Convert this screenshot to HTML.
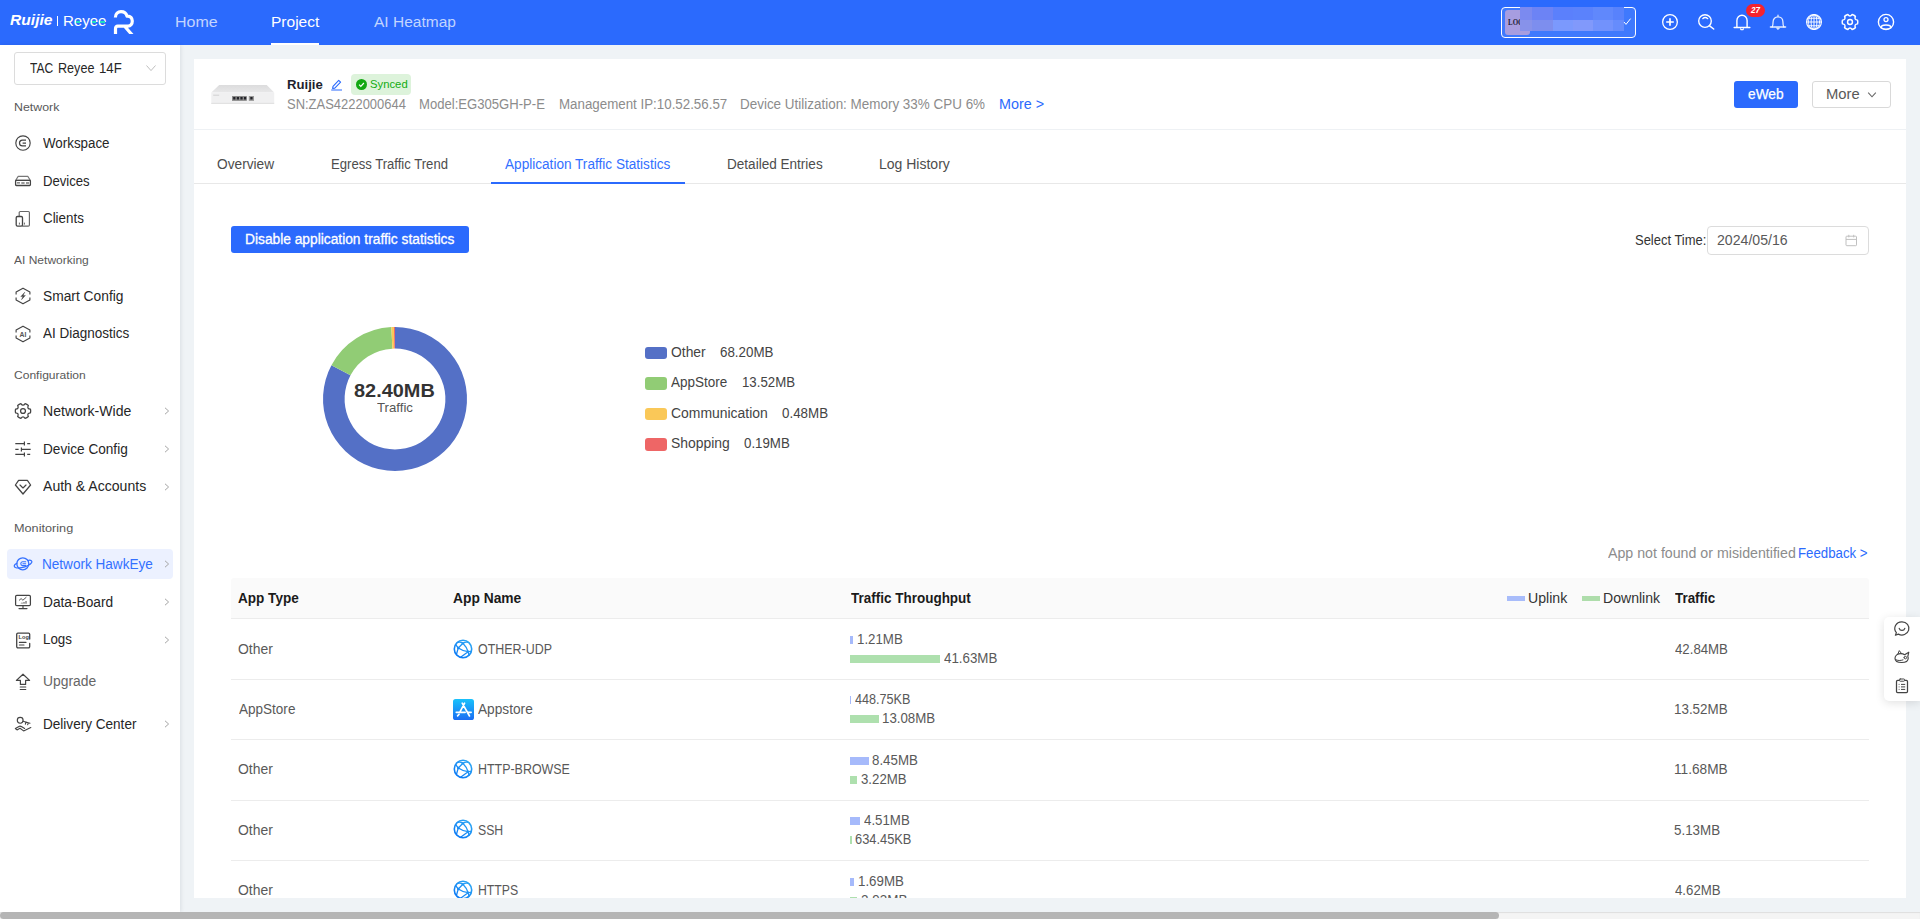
<!DOCTYPE html>
<html lang="en"><head><meta charset="utf-8"><title>Ruijie Reyee Cloud - Application Traffic Statistics</title>
<style>
html,body{margin:0;padding:0}
body{width:1920px;height:919px;overflow:hidden;position:relative;background:#EFF3F6;font-family:"Liberation Sans",sans-serif}
.t{position:absolute;white-space:pre;line-height:1;font-family:"Liberation Sans",sans-serif;transform-origin:0 0}
.ic{position:absolute;overflow:visible}
i{display:block;font-style:normal}
.bar{position:absolute;height:8px}
#hdr{position:absolute;left:0;top:0;width:1920px;height:45px;background:#2B6AFD}
#side{position:absolute;left:0;top:45px;width:180px;height:867px;background:#fff;box-shadow:1px 0 4px rgba(0,21,41,.09)}
#card{position:absolute;left:194px;top:59px;width:1712px;height:839px;background:#fff;overflow:hidden}
#sb{position:absolute;left:0;top:912px;width:1920px;height:7px;background:#f4f4f4;box-shadow:inset 0 1px 1px #dedede}
#sb b{position:absolute;left:0;top:0;width:1499px;height:7px;border-radius:3.500px;background:#b5b5b5}
</style></head><body>
<header id="hdr">
<i style="position:absolute;left:56.500px;top:15.500px;width:1.200px;height:10.500px;background:#fff"></i>
<svg class="ic" style="left:112px;top:8px;overflow:hidden" width="24" height="25.800" viewBox="0 0 24 25.800" fill="none" stroke="#fff" stroke-width="3.200" stroke-linecap="butt" stroke-linejoin="round"><path d="M3.400 9.400C3.400 5.600 6 3.600 9 3.600c3 0 5.300 1.800 6 4.500 3.500-.400 5.300 2.300 5.300 5 0 3-1.800 5-4.300 5H5.800C4.300 18.100 3.500 19.100 3.500 21V27M12.600 18.300L20.400 27.200"/></svg>
<i style="position:absolute;left:271px;top:43px;width:48px;height:2px;background:#fff"></i>
<div style="position:absolute;left:1501px;top:7px;width:133px;height:29px;border:1.500px solid #fff;border-radius:4px;background:#3f79fd"></div>
<i style="position:absolute;left:1505px;top:10px;width:25px;height:24.500px;border-radius:3px;background:#a79de0"></i>
<span class="t" style="left:1507.5px;top:19px;font-size:7.5px;color:#1f1f3a;transform:scaleX(0.9297);font-weight:700;font-family:'Liberation Serif',serif;">LOG</span>
<i style="position:absolute;left:1520.0px;top:7px;width:12.7px;height:13px;background:#7b8af0"></i><i style="position:absolute;left:1520.0px;top:20px;width:12.7px;height:11px;background:#8792ea"></i><i style="position:absolute;left:1532.4px;top:7px;width:20.9px;height:13px;background:#6c83f5"></i><i style="position:absolute;left:1532.4px;top:20px;width:20.9px;height:11px;background:#7d8eee"></i><i style="position:absolute;left:1553.0px;top:7px;width:19.8px;height:13px;background:#5b80fc"></i><i style="position:absolute;left:1553.0px;top:20px;width:19.8px;height:11px;background:#7b99fd"></i><i style="position:absolute;left:1572.5px;top:7px;width:20.8px;height:13px;background:#5b82fc"></i><i style="position:absolute;left:1572.5px;top:20px;width:20.8px;height:11px;background:#8199fb"></i><i style="position:absolute;left:1593.0px;top:7px;width:20.3px;height:13px;background:#6088fc"></i><i style="position:absolute;left:1593.0px;top:20px;width:20.3px;height:11px;background:#7292fc"></i><i style="position:absolute;left:1613.0px;top:7px;width:11.3px;height:13px;background:#5882fc"></i><i style="position:absolute;left:1613.0px;top:20px;width:11.3px;height:11px;background:#668cfc"></i>
<svg class="ic" style="left:1623px;top:17px" width="9" height="9" viewBox="0 0 9 9" fill="none" stroke="#fff" stroke-width="1"><path d="M1 5l2 2.400L7.600 1.600"/></svg>
<svg class="ic" style="left:1660.0px;top:11.9px" width="20" height="20" viewBox="0 0 20 20" fill="none" stroke="#fff" stroke-width="1.15" stroke-linecap="round" stroke-linejoin="round" ><circle cx="10" cy="10" r="7.35" stroke-width="1.3"/><path d="M10 6.2v7.600M6.200 10h7.600" stroke-width="1.7" stroke-linecap="butt"/></svg><svg class="ic" style="left:1695.0px;top:11.2px" width="20" height="20" viewBox="0 0 20 20" fill="none" stroke="#fff" stroke-width="1.15" stroke-linecap="round" stroke-linejoin="round" ><circle cx="10" cy="10" r="6.300" stroke-width="1.35"/><path d="M14.600 14.800L18.700 18" stroke-width="1.5"/><path d="M7.700 7.700Q10.200 5.300 12.800 7.700" stroke-width="1.2"/></svg><svg class="ic" style="left:1732.0px;top:12.0px" width="20" height="20" viewBox="0 0 20 20" fill="none" stroke="#fff" stroke-width="1.15" stroke-linecap="round" stroke-linejoin="round" ><path d="M2.200 15.400H17.800" stroke-width="1.5"/><path d="M4.900 15.400V8.400a5.100 5.100 0 0 1 10.200 0v7" stroke-width="1.4"/><path d="M8.600 16.900a1.500 1.300 0 0 0 2.800 0" stroke-width="1.2"/></svg><svg class="ic" style="left:1768.4px;top:12.0px" width="20" height="20" viewBox="0 0 20 20" fill="none" stroke="rgba(255,255,255,.88)" stroke-width="1.15" stroke-linecap="round" stroke-linejoin="round" ><path d="M2.400 15H17.600" stroke-width="1.400"/><path d="M4.100 15c1-1.500 1-3 1-5.200 0-2.900 2-5 4.900-5s4.900 2.100 4.900 5c0 2.200 0 3.700 1 5.200M10 4.800V3.200" stroke-width="1.25"/><path d="M8.500 16.200L10 17.700l1.500-1.500z" fill="#fff" stroke-width=".5"/></svg><svg class="ic" style="left:1804.0px;top:11.9px" width="20" height="20" viewBox="0 0 20 20" fill="none" stroke="rgba(255,255,255,.92)" stroke-width="1.05" stroke-linecap="round" stroke-linejoin="round" ><circle cx="10" cy="10" r="7.400" stroke-width="1.3"/><ellipse cx="10" cy="10" rx="2.900" ry="7.400"/><ellipse cx="10" cy="10" rx="5.600" ry="7.400" stroke-width=".9"/><path d="M10 2.600v14.800M3.600 6.300h12.800M2.600 10h14.800M3.600 13.700h12.800"/></svg><svg class="ic" style="left:1840.0px;top:11.9px" width="20" height="20" viewBox="0 0 20 20" fill="none" stroke="#fff" stroke-width="1.45" stroke-linecap="round" stroke-linejoin="round" ><path d="M12.15 2.50A7.8 7.8 0 0 1 15.42 4.39Q13.90 7.75 17.57 8.11L17.57 8.11A7.8 7.8 0 0 1 17.57 11.89Q13.90 12.25 15.42 15.61L15.42 15.61A7.8 7.8 0 0 1 12.15 17.50Q10.00 14.50 7.85 17.50L7.85 17.50A7.8 7.8 0 0 1 4.58 15.61Q6.10 12.25 2.43 11.89L2.43 11.89A7.8 7.8 0 0 1 2.43 8.11Q6.10 7.75 4.58 4.39L4.58 4.39A7.8 7.8 0 0 1 7.85 2.50Q10.00 5.50 12.15 2.50Z"/><circle cx="10" cy="10" r="2.45"/></svg><svg class="ic" style="left:1876.0px;top:12.0px" width="20" height="20" viewBox="0 0 20 20" fill="none" stroke="#fff" stroke-width="1.15" stroke-linecap="round" stroke-linejoin="round" ><circle cx="10" cy="10" r="7.600" stroke-width="1.4"/><circle cx="10" cy="7.600" r="2" stroke-width="1.3"/><path d="M5 15.700a5 2.700 0 0 1 10 0" stroke-width="1.4"/><path d="M5.600 16a5 2 0 0 0 8.800 0" stroke-width="1.2"/></svg>
<i style="position:absolute;left:1745.500px;top:4px;width:19.500px;height:13px;border-radius:7px;background:#f5222d"></i>
<span class="t" style="left:9.5px;top:14px;font-size:13.8px;color:#fff;transform:scaleX(1.1310);font-weight:700;font-style:italic;">Ruijie</span><span class="t" style="left:62.5px;top:14px;font-size:14.4px;color:#fff;transform:scaleX(1.0454);">Reyee</span><span class="t" style="left:174.6px;top:14px;font-size:15.4px;color:rgba(255,255,255,.72);transform:scaleX(1.0414);">Home</span><span class="t" style="left:270.7px;top:14px;font-size:15.4px;color:#fff;transform:scaleX(1.0084);">Project</span><span class="t" style="left:373.5px;top:14px;font-size:15.4px;color:rgba(255,255,255,.72);transform:scaleX(1.0075);">AI Heatmap</span><span class="t" style="left:1750.8px;top:6px;font-size:9px;color:#fff;transform:scaleX(0.8986);font-weight:700;font-style:italic;">27</span>
<i style="position:absolute;left:76px;top:20.500px;width:4.4px;height:2px;background:#1fe0c3"></i><i style="position:absolute;left:92px;top:20.500px;width:4.4px;height:2px;background:#1fe0c3"></i><i style="position:absolute;left:100.4px;top:20.500px;width:4.4px;height:2px;background:#1fe0c3"></i>
</header>
<aside id="side">
<div style="position:absolute;left:14px;top:7px;width:150px;height:30.600px;border:1px solid #dcdcdc;border-radius:3px"></div>
<svg class="ic" style="left:145px;top:18px" width="12" height="10" viewBox="0 0 12 10" fill="none" stroke="#bfbfbf" stroke-width="1"><path d="M1.500 2.500L6 7.600 10.500 2.500"/></svg>
<i style="position:absolute;left:7px;top:504px;width:166px;height:30px;border-radius:4px;background:#ECF1FF"></i>
<span class="t" style="left:29.7px;top:16px;font-size:14px;color:#262626;transform:scaleX(0.8580);">TAC</span><span class="t" style="left:57.8px;top:16px;font-size:14px;color:#262626;transform:scaleX(0.9007);">Reyee</span><span class="t" style="left:99.4px;top:16px;font-size:14px;color:#262626;transform:scaleX(0.9427);">14F</span><span class="t" style="left:13.5px;top:56px;font-size:11.6px;color:#595959;transform:scaleX(1.0662);">Network</span><span class="t" style="left:14.1px;top:209px;font-size:11.6px;color:#595959;transform:scaleX(1.0363);">AI Networking</span><span class="t" style="left:14.0px;top:324px;font-size:11.6px;color:#595959;transform:scaleX(1.0401);">Configuration</span><span class="t" style="left:13.6px;top:477px;font-size:11.6px;color:#595959;transform:scaleX(1.0934);">Monitoring</span><span class="t" style="left:43.2px;top:91px;font-size:14px;color:#262626;transform:scaleX(0.9538);">Workspace</span><span class="t" style="left:42.6px;top:129px;font-size:14px;color:#262626;transform:scaleX(0.9373);">Devices</span><span class="t" style="left:43.0px;top:166px;font-size:14px;color:#262626;transform:scaleX(0.9547);">Clients</span><span class="t" style="left:42.8px;top:244px;font-size:14px;color:#262626;transform:scaleX(0.9846);">Smart Config</span><span class="t" style="left:43.4px;top:281px;font-size:14px;color:#262626;transform:scaleX(0.9645);">AI Diagnostics</span><span class="t" style="left:42.7px;top:359px;font-size:14px;color:#262626;transform:scaleX(1.0041);">Network-Wide</span><span class="t" style="left:42.8px;top:397px;font-size:14px;color:#262626;transform:scaleX(0.9724);">Device Config</span><span class="t" style="left:43.2px;top:434px;font-size:14px;color:#262626;transform:scaleX(1.0044);">Auth &amp; Accounts</span><span class="t" style="left:42.1px;top:512px;font-size:14px;color:#3370FF;transform:scaleX(0.9686);">Network HawkEye</span><span class="t" style="left:42.7px;top:550px;font-size:14px;color:#262626;transform:scaleX(0.9801);">Data-Board</span><span class="t" style="left:42.6px;top:587px;font-size:14px;color:#262626;transform:scaleX(0.9531);">Logs</span><span class="t" style="left:42.9px;top:629px;font-size:14px;color:#666;transform:scaleX(0.9903);">Upgrade</span><span class="t" style="left:42.7px;top:672px;font-size:14px;color:#262626;transform:scaleX(0.9686);">Delivery Center</span>
<svg class="ic" style="left:13.2px;top:87.8px" width="20" height="20" viewBox="0 0 20 20" fill="none" stroke="#444" stroke-width="1.15" stroke-linecap="round" stroke-linejoin="round" ><circle cx="10" cy="10" r="7.2"/><path d="M13 7.1H9.4a2.9 2.9 0 0 0 0 5.8H13M9.6 10H13" stroke-width="1.25" stroke-linecap="butt"/></svg><svg class="ic" style="left:13.0px;top:126.0px" width="20" height="20" viewBox="0 0 20 20" fill="none" stroke="#444" stroke-width="1.15" stroke-linecap="round" stroke-linejoin="round" ><path d="M5.2 5.4H14.8L17.3 9.2H2.7Z" stroke="#777"/><rect x="2.6" y="9.3" width="14.8" height="5.2" rx=".8" stroke-width="1.3"/><path d="M4.4 11.9H6.6" stroke-width="1"/><path d="M8.3 11.9H11.6M13 11.9H16" stroke="#999" stroke-width="2" stroke-linecap="butt"/></svg><svg class="ic" style="left:13.0px;top:164.0px" width="20" height="20" viewBox="0 0 20 20" fill="none" stroke="#444" stroke-width="1.15" stroke-linecap="round" stroke-linejoin="round" ><path d="M6.2 7.2V3.6a1.1 1.1 0 0 1 1.1-1.1H15.3a1.1 1.1 0 0 1 1.1 1.1V16a1.1 1.1 0 0 1-1.1 1.1H9.6" stroke="#666"/><rect x="3.2" y="7.5" width="6.3" height="9.6" rx="1.3" stroke-width="1.3"/><path d="M6.4 14v1.2M11.4 14v1.2" stroke-width="1" stroke="#666"/></svg><svg class="ic" style="left:13.0px;top:241.0px" width="20" height="20" viewBox="0 0 20 20" fill="none" stroke="#444" stroke-width="1.15" stroke-linecap="round" stroke-linejoin="round" ><path d="M3.1 8.5V6.1L10 2.2 16.9 6.1V8.5M3.1 11.5V13.9L10 17.8 16.9 13.9V11.5" stroke-linecap="butt"/><path d="M11.6 6.4L7.8 10.6H9.9L8.5 13.7L12.4 9.4H10.2Z" fill="#444" stroke-width=".4"/></svg><svg class="ic" style="left:13.0px;top:279.0px" width="20" height="20" viewBox="0 0 20 20" fill="none" stroke="#444" stroke-width="1.15" stroke-linecap="round" stroke-linejoin="round" ><path d="M3.1 8.5V6.1L10 2.2 16.9 6.1V8.5M3.1 11.5V13.9L10 17.8 16.9 13.9V11.5" stroke-linecap="butt"/><text x="10" y="12.5" text-anchor="middle" font-family="Liberation Sans,sans-serif" font-size="6.800" font-weight="700" fill="#555" stroke="none">AI</text></svg><svg class="ic" style="left:13.0px;top:355.9px" width="20" height="20" viewBox="0 0 20 20" fill="none" stroke="#444" stroke-width="1.25" stroke-linecap="round" stroke-linejoin="round" ><path d="M12.12 2.60A7.7 7.7 0 0 1 15.35 4.46Q13.64 7.90 17.47 8.14L17.47 8.14A7.7 7.7 0 0 1 17.47 11.86Q13.64 12.10 15.35 15.54L15.35 15.54A7.7 7.7 0 0 1 12.12 17.40Q10.00 14.20 7.88 17.40L7.88 17.40A7.7 7.7 0 0 1 4.65 15.54Q6.36 12.10 2.53 11.86L2.53 11.86A7.7 7.7 0 0 1 2.53 8.14Q6.36 7.90 4.65 4.46L4.65 4.46A7.7 7.7 0 0 1 7.88 2.60Q10.00 5.80 12.12 2.60Z"/><circle cx="10" cy="10" r="2.45"/></svg><svg class="ic" style="left:13.0px;top:394.0px" width="20" height="20" viewBox="0 0 20 20" fill="none" stroke="#444" stroke-width="1.15" stroke-linecap="round" stroke-linejoin="round" ><path d="M2.3 4.6H11.4M11.4 2.6v4M14.2 4.6H17.2M2.3 10.400H5.6M8.4 8.400v4M8.4 10.400H17.7M2.3 15.4H11.4M11.4 13.4v4M14.2 15.4H17.2" stroke-linecap="butt" stroke-width="1.2"/></svg><svg class="ic" style="left:13.0px;top:431.5px" width="20" height="20" viewBox="0 0 20 20" fill="none" stroke="#444" stroke-width="1.15" stroke-linecap="round" stroke-linejoin="round" ><path d="M5.6 3.4H14.4L17.6 8 10 17 2.4 8Z" stroke-width="1.25"/><path d="M7 8l3 3 3-3"/></svg><svg class="ic" style="left:13.0px;top:509.0px" width="20" height="20" viewBox="0 0 20 20" fill="none" stroke="#3370FF" stroke-width="1.2" stroke-linecap="round" stroke-linejoin="round" ><circle cx="9.800" cy="9.800" r="6" stroke-width="1.300"/><path d="M15.400 6.300C18.200 5.800 19.400 7 18.700 8.500 17.800 10.400 13.200 13 8.600 13.700 4.500 14.300 1.700 13.700 1.300 12.300 1 11.200 2.300 9.900 4 9.200" stroke-width="1.200"/><path d="M12.700 7.800H9.700a1.900 1.900 0 0 0 0 3.800H12.700M9.900 9.700H12.700" stroke-width="1.050"/></svg><svg class="ic" style="left:13.0px;top:547.0px" width="20" height="20" viewBox="0 0 20 20" fill="none" stroke="#444" stroke-width="1.15" stroke-linecap="round" stroke-linejoin="round" ><rect x="2.6" y="3.4" width="14.8" height="10.3" rx="1.2" stroke-width="1.25"/><path d="M10 13.8v2.7M6 16.6h8"/><path d="M6.3 8.2l1.8-1.6 1.8 1.6 3.2-2.8" stroke-width=".9"/><path d="M7 11.7h.1M9 10.6v1.1M11 10v1.7M13 9v2.7" stroke-width="1" stroke-linecap="butt"/></svg><svg class="ic" style="left:13.0px;top:584.5px" width="20" height="20" viewBox="0 0 20 20" fill="none" stroke="#444" stroke-width="1.15" stroke-linecap="round" stroke-linejoin="round" ><path d="M16.7 9V4.3a1.2 1.2 0 0 0-1.2-1.2H4.9a1.2 1.2 0 0 0-1.2 1.2V16.6a1.2 1.2 0 0 0 1.2 1.2H15.5a1.2 1.2 0 0 0 1.2-1.2V13.4" stroke-width="1.3"/><path d="M6.4 12.4H13M6.4 15H11" stroke-width="1.1"/><text x="5.6" y="9.4" font-family="Liberation Sans,sans-serif" font-size="5.6" font-weight="700" fill="#444" stroke="none">Log</text></svg><svg class="ic" style="left:13.0px;top:627.0px" width="20" height="20" viewBox="0 0 20 20" fill="none" stroke="#444" stroke-width="1.15" stroke-linecap="round" stroke-linejoin="round" ><path d="M10 2.2L16.6 8.4H12.6V12.4H7.4V8.4H3.4Z" stroke-width="1.2"/><path d="M7.2 15H12.8M7.2 17.5H12.8" stroke-width="1.1"/></svg><svg class="ic" style="left:13.0px;top:669.0px" width="20" height="20" viewBox="0 0 20 20" fill="none" stroke="#444" stroke-width="1.15" stroke-linecap="round" stroke-linejoin="round" ><circle cx="7.2" cy="6.3" r="2.9"/><path d="M10 7.2L17 9.2M13 8.1l-.6 2M15.3 8.8l-.6 1.9"/><path d="M2.4 14.6L6 12.4c1-.5 1.800-.2 2.800.4L11.600 14.400M2.400 14.600L4 15.900 7 14.300l3.600 2.600L17.800 13.600" stroke-width="1.15"/></svg>
<svg class="ic" style="left:162px;top:361.0px" width="10" height="10" viewBox="0 0 10 10" fill="none" stroke="#a6a6a6" stroke-width="1"><path d="M3 1.8L6.6 5 3 8.2"/></svg><svg class="ic" style="left:162px;top:399.0px" width="10" height="10" viewBox="0 0 10 10" fill="none" stroke="#a6a6a6" stroke-width="1"><path d="M3 1.8L6.6 5 3 8.2"/></svg><svg class="ic" style="left:162px;top:436.5px" width="10" height="10" viewBox="0 0 10 10" fill="none" stroke="#a6a6a6" stroke-width="1"><path d="M3 1.8L6.6 5 3 8.2"/></svg><svg class="ic" style="left:162px;top:514.0px" width="10" height="10" viewBox="0 0 10 10" fill="none" stroke="#a6a6a6" stroke-width="1"><path d="M3 1.8L6.6 5 3 8.2"/></svg><svg class="ic" style="left:162px;top:552.0px" width="10" height="10" viewBox="0 0 10 10" fill="none" stroke="#a6a6a6" stroke-width="1"><path d="M3 1.8L6.6 5 3 8.2"/></svg><svg class="ic" style="left:162px;top:589.5px" width="10" height="10" viewBox="0 0 10 10" fill="none" stroke="#a6a6a6" stroke-width="1"><path d="M3 1.8L6.6 5 3 8.2"/></svg><svg class="ic" style="left:162px;top:674.0px" width="10" height="10" viewBox="0 0 10 10" fill="none" stroke="#a6a6a6" stroke-width="1"><path d="M3 1.8L6.6 5 3 8.2"/></svg>
</aside>
<main id="card">
<i style="position:absolute;left:0;top:70px;width:1712px;height:1px;background:#EEF1F4"></i>
<svg class="ic" style="left:16px;top:24px" width="66" height="24" viewBox="0 0 66 24"><defs><linearGradient id="dv" x1="0" y1="0" x2="0" y2="1"><stop offset="0" stop-color="#dcdcdd"/><stop offset="1" stop-color="#e7e7e8"/></linearGradient></defs><path d="M9.200 2.100H56.700L64.200 9.400H1.300Z" fill="url(#dv)"/><path d="M1.300 9.400H64.200V20.800H1.300Z" fill="#f0f0f1"/><path d="M1.300 20.400H64.200" stroke="#dcdcdc" stroke-width=".9"/><rect x="22" y="13" width="14.800" height="4.900" fill="#8b8b8b"/><rect x="38.800" y="13" width="5.200" height="4.900" fill="#9a9a9a"/><path d="M23.200 13.900h2.200v2.500h-2.200zM26.800 13.900h2.200v2.500h-2.200zM30.400 13.900h2.200v2.500h-2.200zM34 13.900h2.200v2.500h-2.200zM40.300 13.900h2.300v2.500h-2.300z" fill="#24242a"/><path d="M3.200 12.200h6" stroke="#c4c4c4" stroke-width=".7"/></svg>
<svg class="ic" style="left:136px;top:19px" width="13" height="13" viewBox="0 0 13 13" fill="none" stroke="#2B6AFD" stroke-width="1.100" stroke-linejoin="round"><path d="M3 8.300L8.700 2.300 10.600 4.200 4.800 10.100 2.600 10.500ZM1.200 12H12"/></svg>
<i style="position:absolute;left:157px;top:15px;width:60px;height:21px;border-radius:4px;background:#DDF3DB"></i>
<svg class="ic" style="left:161.600px;top:20px" width="11" height="11" viewBox="0 0 11 11"><circle cx="5.500" cy="5.500" r="5.500" fill="#13a813"/><path d="M3.100 5.600l1.700 1.700 3.100-3.300" stroke="#fff" stroke-width="1.200" fill="none"/></svg>
<i style="position:absolute;left:1540px;top:22px;width:64px;height:27px;border-radius:3px;background:#2B6AFD"></i>
<div style="position:absolute;left:1618px;top:22px;width:77px;height:25px;border:1px solid #d9d9d9;border-radius:3px"></div>
<svg class="ic" style="left:1673px;top:32px" width="10" height="8" viewBox="0 0 10 8" fill="none" stroke="#666" stroke-width="1.050"><path d="M1.200 1.600L5 5.800 8.800 1.600"/></svg>
<i style="position:absolute;left:0;top:124px;width:1712px;height:1px;background:#e8e8e8"></i>
<i style="position:absolute;left:297px;top:123px;width:194px;height:2px;background:#2B6AFD"></i>
<i style="position:absolute;left:37px;top:167px;width:238px;height:27px;border-radius:3px;background:#2B6AFD"></i>
<div style="position:absolute;left:1513px;top:167px;width:160px;height:27px;border:1px solid #dcdcdc;border-radius:4px"></div>
<svg class="ic" style="left:1651px;top:175px" width="13" height="13" viewBox="0 0 13 13" fill="none" stroke="#c0c0c0" stroke-width="1"><rect x="1" y="2.200" width="10.500" height="9.500" rx=".8"/><path d="M1 5.400h10.500M3.800 .8v2.600M8.700 .8v2.600"/></svg>
<svg class="ic" style="left:121px;top:260px" width="160" height="160" viewBox="0 0 160 160"><path d="M80.00 8.00A72 72 0 1 1 16.43 46.20L35.50 56.34A50.4 50.4 0 1 0 80.00 29.60Z" fill="#5470C6"/><path d="M16.43 46.20A72 72 0 0 1 76.32 8.09L77.43 29.67A50.4 50.4 0 0 0 35.50 56.34Z" fill="#91CC75"/><path d="M76.32 8.09A72 72 0 0 1 78.96 8.01L79.27 29.61A50.4 50.4 0 0 0 77.43 29.67Z" fill="#FAC858"/><path d="M78.96 8.01A72 72 0 0 1 80.00 8.00L80.00 29.60A50.4 50.4 0 0 0 79.27 29.61Z" fill="#EE6666"/></svg>
<i style="position:absolute;left:450.6px;top:287.9px;width:22.400px;height:12.400px;border-radius:3px;background:#5470C6"></i><i style="position:absolute;left:450.6px;top:318.4px;width:22.400px;height:12.400px;border-radius:3px;background:#91CC75"></i><i style="position:absolute;left:450.6px;top:348.9px;width:22.400px;height:12.400px;border-radius:3px;background:#FAC858"></i><i style="position:absolute;left:450.6px;top:379.4px;width:22.400px;height:12.400px;border-radius:3px;background:#EE6666"></i>
<i style="position:absolute;left:37px;top:519px;width:1638px;height:40px;background:#FAFAFA;border-radius:3px 3px 0 0;box-shadow:0 1px 0 #ececec"></i>
<i style="position:absolute;left:1313px;top:537px;width:18px;height:5px;background:#A8BCFA"></i>
<i style="position:absolute;left:1388px;top:537px;width:18px;height:5px;background:#AEDDAB"></i>
<i style="position:absolute;left:37px;width:1638px;top:620px;height:1px;background:#ececec"></i><i style="position:absolute;left:37px;width:1638px;top:680px;height:1px;background:#ececec"></i><i style="position:absolute;left:37px;width:1638px;top:741px;height:1px;background:#ececec"></i><i style="position:absolute;left:37px;width:1638px;top:801px;height:1px;background:#ececec"></i>
<i class="bar" style="left:656px;top:577.0px;width:3px;background:#A6BAFB"></i><i class="bar" style="left:656px;top:596.0px;width:90px;background:#AEE0AE"></i><i class="bar" style="left:656px;top:637.0px;width:1px;background:#A6BAFB"></i><i class="bar" style="left:656px;top:656.0px;width:29px;background:#AEE0AE"></i><i class="bar" style="left:656px;top:698.0px;width:19px;background:#A6BAFB"></i><i class="bar" style="left:656px;top:717.0px;width:7px;background:#AEE0AE"></i><i class="bar" style="left:656px;top:758.0px;width:10px;background:#A6BAFB"></i><i class="bar" style="left:656px;top:777.0px;width:2px;background:#AEE0AE"></i><i class="bar" style="left:656px;top:819.0px;width:4px;background:#A6BAFB"></i><i class="bar" style="left:656px;top:838.0px;width:7px;background:#AEE0AE"></i>
<svg width="0" height="0" style="position:absolute"><defs><linearGradient id="gg" gradientUnits="userSpaceOnUse" x1="17" y1="2" x2="3" y2="18"><stop offset="0" stop-color="#2ea8f4"/><stop offset="1" stop-color="#0a78f5"/></linearGradient></defs></svg><svg class="ic" style="left:259.1px;top:579.6px" width="20" height="20" viewBox="0 0 20 20" fill="none" stroke="url(#gg)" stroke-linecap="round"><circle cx="10" cy="10" r="8.700" stroke-width="1.600"/><path d="M9.900 4.300L5.300 9M9.900 4.300Q13.600 8 15.100 12.700M5.300 9Q10 12.200 15.100 12.700M9.900 4.300Q7.500 2.600 4.600 3.400M9.900 4.300Q12.500 2.600 15.300 3.300M5.300 9L2.700 5.600M5.300 9Q4.300 12 3.600 15M15.100 12.700L18.500 12.300M15.100 12.700L7.600 18.200M15.100 12.700L15.900 16.200" stroke-width="1.250"/><circle cx="9.900" cy="4.300" r="1.200" fill="url(#gg)" stroke="none"/><circle cx="5.300" cy="9" r="1.300" fill="url(#gg)" stroke="none"/><circle cx="15.100" cy="12.700" r="1.100" fill="url(#gg)" stroke="none"/></svg><svg class="ic" style="left:259.1px;top:700.0px" width="20" height="20" viewBox="0 0 20 20" fill="none" stroke="url(#gg)" stroke-linecap="round"><circle cx="10" cy="10" r="8.700" stroke-width="1.600"/><path d="M9.900 4.300L5.300 9M9.900 4.300Q13.600 8 15.100 12.700M5.300 9Q10 12.200 15.100 12.700M9.900 4.300Q7.500 2.600 4.600 3.400M9.900 4.300Q12.500 2.600 15.300 3.300M5.300 9L2.700 5.600M5.300 9Q4.300 12 3.600 15M15.100 12.700L18.500 12.300M15.100 12.700L7.600 18.200M15.100 12.700L15.900 16.200" stroke-width="1.250"/><circle cx="9.900" cy="4.300" r="1.200" fill="url(#gg)" stroke="none"/><circle cx="5.300" cy="9" r="1.300" fill="url(#gg)" stroke="none"/><circle cx="15.100" cy="12.700" r="1.100" fill="url(#gg)" stroke="none"/></svg><svg class="ic" style="left:259.1px;top:760.3px" width="20" height="20" viewBox="0 0 20 20" fill="none" stroke="url(#gg)" stroke-linecap="round"><circle cx="10" cy="10" r="8.700" stroke-width="1.600"/><path d="M9.900 4.300L5.300 9M9.900 4.300Q13.600 8 15.100 12.700M5.300 9Q10 12.200 15.100 12.700M9.900 4.300Q7.500 2.600 4.600 3.400M9.900 4.300Q12.500 2.600 15.300 3.300M5.300 9L2.700 5.600M5.300 9Q4.300 12 3.600 15M15.100 12.700L18.500 12.300M15.100 12.700L7.600 18.200M15.100 12.700L15.900 16.200" stroke-width="1.250"/><circle cx="9.900" cy="4.300" r="1.200" fill="url(#gg)" stroke="none"/><circle cx="5.300" cy="9" r="1.300" fill="url(#gg)" stroke="none"/><circle cx="15.100" cy="12.700" r="1.100" fill="url(#gg)" stroke="none"/></svg><svg class="ic" style="left:259.1px;top:820.7px" width="20" height="20" viewBox="0 0 20 20" fill="none" stroke="url(#gg)" stroke-linecap="round"><circle cx="10" cy="10" r="8.700" stroke-width="1.600"/><path d="M9.900 4.300L5.300 9M9.900 4.300Q13.600 8 15.100 12.700M5.300 9Q10 12.200 15.100 12.700M9.900 4.300Q7.500 2.600 4.600 3.400M9.900 4.300Q12.500 2.600 15.300 3.300M5.300 9L2.700 5.600M5.300 9Q4.300 12 3.600 15M15.100 12.700L18.500 12.300M15.100 12.700L7.600 18.200M15.100 12.700L15.900 16.200" stroke-width="1.250"/><circle cx="9.900" cy="4.300" r="1.200" fill="url(#gg)" stroke="none"/><circle cx="5.300" cy="9" r="1.300" fill="url(#gg)" stroke="none"/><circle cx="15.100" cy="12.700" r="1.100" fill="url(#gg)" stroke="none"/></svg><svg class="ic" style="left:259px;top:640px" width="21" height="21" viewBox="0 0 21 21"><defs><linearGradient id="ag" x1="0" y1="0" x2="0" y2="1"><stop offset="0" stop-color="#19c2fb"/><stop offset="1" stop-color="#1a6cf3"/></linearGradient></defs><rect width="21" height="21" rx="2.600" fill="url(#ag)"/><path d="M11.600 4.200L7 12.900M9.200 4.200L16.500 17M3.200 13.300H12.200M15 13.300H18.200M6.100 15.300L4.600 16.900" stroke="#fff" stroke-width="1.650" stroke-linecap="round" fill="none"/></svg>
<span class="t" style="left:93.2px;top:19px;font-size:13.6px;color:#1f1f2e;transform:scaleX(0.9677);font-weight:700;">Ruijie</span><span class="t" style="left:175.8px;top:19px;font-size:11.6px;color:#12ad12;transform:scaleX(0.9741);">Synced</span><span class="t" style="left:92.5px;top:38px;font-size:14px;color:#8c8c8c;transform:scaleX(0.9259);">SN:ZAS4222000644</span><span class="t" style="left:225.2px;top:38px;font-size:14px;color:#8c8c8c;transform:scaleX(0.9352);">Model:EG305GH-P-E</span><span class="t" style="left:364.8px;top:38px;font-size:14px;color:#8c8c8c;transform:scaleX(0.9521);">Management IP:10.52.56.57</span><span class="t" style="left:546.1px;top:38px;font-size:14px;color:#8c8c8c;transform:scaleX(0.9603);">Device Utilization: Memory 33% CPU 6%</span><span class="t" style="left:805.4px;top:38px;font-size:14px;color:#2B6AFD;transform:scaleX(1.0254);">More &gt;</span><span class="t" style="left:1554.4px;top:28px;font-size:14px;color:#fff;transform:scaleX(0.9800);-webkit-text-stroke:.25px #fff;">eWeb</span><span class="t" style="left:1632.1px;top:28px;font-size:14px;color:#595959;transform:scaleX(1.0558);">More</span><span class="t" style="left:23.3px;top:98px;font-size:14px;color:#4d4d4d;transform:scaleX(0.9787);">Overview</span><span class="t" style="left:137.0px;top:98px;font-size:14px;color:#4d4d4d;transform:scaleX(0.9356);">Egress Traffic Trend</span><span class="t" style="left:311.1px;top:98px;font-size:14px;color:#3370FF;transform:scaleX(0.9715);">Application Traffic Statistics</span><span class="t" style="left:532.6px;top:98px;font-size:14px;color:#4d4d4d;transform:scaleX(0.9680);">Detailed Entries</span><span class="t" style="left:685.2px;top:98px;font-size:14px;color:#4d4d4d;transform:scaleX(1.0002);">Log History</span><span class="t" style="left:51.3px;top:173px;font-size:14px;color:#fff;transform:scaleX(0.9830);-webkit-text-stroke:.3px #fff;">Disable application traffic statistics</span><span class="t" style="left:1441.3px;top:174px;font-size:14px;color:#333;transform:scaleX(0.9256);">Select Time:</span><span class="t" style="left:1523.2px;top:174px;font-size:14px;color:#595959;transform:scaleX(1.0078);">2024/05/16</span><span class="t" style="left:160.0px;top:324px;font-size:17.6px;color:#333;transform:scaleX(1.1311);font-weight:700;">82.40MB</span><span class="t" style="left:182.5px;top:343px;font-size:12.6px;color:#555;transform:scaleX(1.0472);">Traffic</span><span class="t" style="left:476.8px;top:286px;font-size:14px;color:#444;transform:scaleX(0.9909);">Other</span><span class="t" style="left:526.3px;top:286px;font-size:14px;color:#444;transform:scaleX(0.9548);">68.20MB</span><span class="t" style="left:477.1px;top:316px;font-size:14px;color:#444;transform:scaleX(0.9617);">AppStore</span><span class="t" style="left:547.8px;top:316px;font-size:14px;color:#444;transform:scaleX(0.9458);">13.52MB</span><span class="t" style="left:477.0px;top:347px;font-size:14px;color:#444;transform:scaleX(0.9948);">Communication</span><span class="t" style="left:587.5px;top:347px;font-size:14px;color:#444;transform:scaleX(0.9545);">0.48MB</span><span class="t" style="left:476.6px;top:377px;font-size:14px;color:#444;transform:scaleX(0.9945);">Shopping</span><span class="t" style="left:550.1px;top:377px;font-size:14px;color:#444;transform:scaleX(0.9478);">0.19MB</span><span class="t" style="left:1413.8px;top:487px;font-size:14px;color:#8c8c8c;transform:scaleX(1.0139);">App not found or misidentified</span><span class="t" style="left:1604.3px;top:487px;font-size:14px;color:#2B6AFD;transform:scaleX(0.9460);">Feedback &gt;</span><span class="t" style="left:44.3px;top:532px;font-size:14px;color:#1a1a1a;transform:scaleX(0.9679);font-weight:700;">App Type</span><span class="t" style="left:258.6px;top:532px;font-size:14px;color:#1a1a1a;transform:scaleX(0.9859);font-weight:700;">App Name</span><span class="t" style="left:656.9px;top:532px;font-size:14px;color:#1a1a1a;transform:scaleX(0.9631);font-weight:700;">Traffic Throughput</span><span class="t" style="left:1334.3px;top:532px;font-size:14px;color:#333;transform:scaleX(1.0077);">Uplink</span><span class="t" style="left:1409.2px;top:532px;font-size:14px;color:#333;transform:scaleX(1.0050);">Downlink</span><span class="t" style="left:1480.8px;top:532px;font-size:14px;color:#1a1a1a;transform:scaleX(0.9568);font-weight:700;">Traffic</span><span class="t" style="left:44.0px;top:583px;font-size:14px;color:#595959;transform:scaleX(0.9951);">Other</span><span class="t" style="left:284.3px;top:583px;font-size:14px;color:#595959;transform:scaleX(0.8890);">OTHER-UDP</span><span class="t" style="left:1480.7px;top:583px;font-size:14px;color:#595959;transform:scaleX(0.9442);">42.84MB</span><span class="t" style="left:662.5px;top:573px;font-size:14px;color:#595959;transform:scaleX(0.9485);">1.21MB</span><span class="t" style="left:750.3px;top:592px;font-size:14px;color:#595959;transform:scaleX(0.9518);">41.63MB</span><span class="t" style="left:44.8px;top:643px;font-size:14px;color:#595959;transform:scaleX(0.9662);">AppStore</span><span class="t" style="left:284.1px;top:643px;font-size:14px;color:#595959;transform:scaleX(0.9769);">Appstore</span><span class="t" style="left:1480.1px;top:643px;font-size:14px;color:#595959;transform:scaleX(0.9560);">13.52MB</span><span class="t" style="left:660.9px;top:633px;font-size:14px;color:#595959;transform:scaleX(0.9019);">448.75KB</span><span class="t" style="left:688.1px;top:652px;font-size:14px;color:#595959;transform:scaleX(0.9488);">13.08MB</span><span class="t" style="left:44.0px;top:703px;font-size:14px;color:#595959;transform:scaleX(0.9951);">Other</span><span class="t" style="left:283.7px;top:703px;font-size:14px;color:#595959;transform:scaleX(0.8882);">HTTP-BROWSE</span><span class="t" style="left:1480.1px;top:703px;font-size:14px;color:#595959;transform:scaleX(0.9752);">11.68MB</span><span class="t" style="left:678.4px;top:694px;font-size:14px;color:#595959;transform:scaleX(0.9502);">8.45MB</span><span class="t" style="left:666.7px;top:713px;font-size:14px;color:#595959;transform:scaleX(0.9465);">3.22MB</span><span class="t" style="left:44.0px;top:764px;font-size:14px;color:#595959;transform:scaleX(0.9951);">Other</span><span class="t" style="left:283.7px;top:764px;font-size:14px;color:#595959;transform:scaleX(0.8747);">SSH</span><span class="t" style="left:1479.9px;top:764px;font-size:14px;color:#595959;transform:scaleX(0.9566);">5.13MB</span><span class="t" style="left:670.0px;top:754px;font-size:14px;color:#595959;transform:scaleX(0.9477);">4.51MB</span><span class="t" style="left:661.2px;top:773px;font-size:14px;color:#595959;transform:scaleX(0.9173);">634.45KB</span><span class="t" style="left:44.0px;top:824px;font-size:14px;color:#595959;transform:scaleX(0.9951);">Other</span><span class="t" style="left:283.8px;top:824px;font-size:14px;color:#595959;transform:scaleX(0.8761);">HTTPS</span><span class="t" style="left:1480.5px;top:824px;font-size:14px;color:#595959;transform:scaleX(0.9458);">4.62MB</span><span class="t" style="left:663.5px;top:815px;font-size:14px;color:#595959;transform:scaleX(0.9514);">1.69MB</span><span class="t" style="left:666.9px;top:834px;font-size:14px;color:#595959;transform:scaleX(0.9613);">2.93MB</span>
</main>
<div style="position:absolute;left:1884px;top:617px;width:36px;height:84px;background:#fff;border-radius:5px 0 0 5px;box-shadow:0 2px 10px rgba(0,0,0,.12)"></div>
<svg class="ic" style="left:1892.0px;top:619.0px" width="20" height="20" viewBox="0 0 20 20" fill="none" stroke="#444" stroke-width="1.2" stroke-linecap="round" stroke-linejoin="round" ><path d="M10 2.800a7 6.600 0 1 1-3.600 12.300L3.400 16.200l1-2.600A7 6.600 0 0 1 10 2.800z"/><path d="M7.200 9.300a2.900 2.900 0 0 0 5.600 0" /></svg><svg class="ic" style="left:1892.0px;top:647.4px" width="20" height="20" viewBox="0 0 20 20" fill="none" stroke="#444" stroke-width="1.15" stroke-linecap="round" stroke-linejoin="round" ><path d="M3 11.200c0-2.800 2.600-4.600 5.800-4.600 1.500 0 2.700.300 3.800 1.100l4.200-2.500-1 4.300c.3.600.4 1.100.4 1.700 0 2.600-2.800 4.300-6.600 4.300S3 13.800 3 11.200z"/><path d="M5.800 7.200L7.300 3.600 9.600 6.700M3.600 12.600c2 1.200 5 1.200 7.400.300M12 10.600a1.300 1.300 0 1 0 2.600 0 1.300 1.300 0 0 0-2.600 0" stroke-width="1"/></svg><svg class="ic" style="left:1892.0px;top:675.5px" width="20" height="20" viewBox="0 0 20 20" fill="none" stroke="#444" stroke-width="1.2" stroke-linecap="round" stroke-linejoin="round" ><rect x="4.500" y="4.300" width="11" height="12.400" rx="1.100" stroke-width="1.250"/><rect x="7.400" y="3" width="5.200" height="2.200" rx=".8" fill="#fff" stroke-width="1"/><path d="M6.700 8.400h.8M9 8.400h4.200M6.700 10.900h.8M9 10.900h4.200M6.700 13.400h.8M9 13.400h4.200" stroke-width="1" stroke-linecap="butt"/></svg>
<div id="sb"><b></b></div>
</body></html>
